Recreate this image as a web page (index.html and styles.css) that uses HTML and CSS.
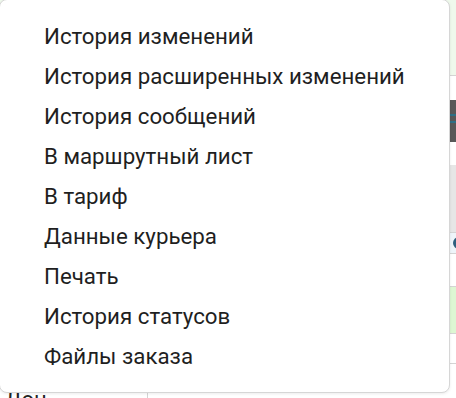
FILE: index.html
```html
<!DOCTYPE html>
<html lang="ru">
<head>
<meta charset="utf-8">
<link rel="stylesheet" href="styles.css">
</head>
<body>
<div class="page">
  <div class="bg">
    <div class="row r-green1"></div>
    <div class="row r-white1"></div>
    <div class="row r-dark"><span class="dark-mark"></span><span class="dark-mark m2"></span></div>
    <div class="row r-white2"></div>
    <div class="row r-grey"></div>
    <div class="row r-blue"><span class="dot"></span></div>
    <div class="row r-white3"></div>
    <div class="row r-green2"></div>
    <div class="row r-white4"></div>
    <div class="row r-last">
      <div class="cell-left">Дон</div>
      <div class="cell-right"></div>
    </div>
  </div>
  <ul class="menu">
    <li>История изменений</li>
    <li>История расширенных изменений</li>
    <li>История сообщений</li>
    <li>В маршрутный лист</li>
    <li>В тариф</li>
    <li>Данные курьера</li>
    <li>Печать</li>
    <li>История статусов</li>
    <li>Файлы заказа</li>
  </ul>
</div>
</body>
</html>
```
FILE: styles.css
```css
html, body {
  margin: 0;
  padding: 0;
  background: #fff;
}
body {
  font-family: Roboto, "Noto Sans", Arial, sans-serif;
  color: #222;
}
.page {
  position: relative;
  width: 456px;
  height: 398px;
  overflow: hidden;
}
.bg {
  display: flex;
  flex-direction: column;
}
.row {
  position: relative;
  border-bottom: 1px solid #d4d4d4;
}
.r-green1 { height: 75px; background: #eff9ec; }
.r-white1 { height: 24px; background: #fff; border-bottom: none; }
.r-dark { height: 42px; background: #585858; border-bottom: none; }
.dark-mark {
  position: absolute;
  right: 0;
  top: 14px;
  width: 6px;
  height: 2px;
  background: #2e6f86;
}
.dark-mark.m2 { top: 21px; }
.r-white2 { height: 23px; background: #fff; border-bottom: none; }
.r-grey { height: 67px; background: #e6e6e6; }
.r-blue { height: 20px; background: #eef5fa; }
.dot {
  position: absolute;
  left: 453px;
  top: 4px;
  width: 12px;
  height: 12px;
  border-radius: 50%;
  background: #2e5f7e;
}
.r-white3 { height: 32px; background: #fff; }
.r-green2 { height: 46px; background: #ddf7d3; }
.r-white4 { height: 29px; background: #fff; }
.r-last {
  display: flex;
  height: 40px;
  border-bottom: none;
}
.cell-left {
  width: 142px;
  border-right: 1px solid #d4d4d4;
  padding: 24px 0 0 5px;
  font-size: 22px;
  line-height: 24px;
  color: #222;
}
.menu {
  position: absolute;
  left: -1px;
  top: -1px;
  width: 451px;
  height: 394px;
  margin: 0;
  padding: 16px 0 0 0;
  box-sizing: border-box;
  list-style: none;
  background: #fff;
  border: 1px solid #d6d6d6;
  border-radius: 8px;
  box-shadow: 0 1px 3px rgba(0,0,0,0.08);
}
.menu li {
  height: 40px;
  line-height: 40px;
  padding-left: 44px;
  font-size: 22.3px;
  color: #1f1f1f;
  white-space: nowrap;
}
```
